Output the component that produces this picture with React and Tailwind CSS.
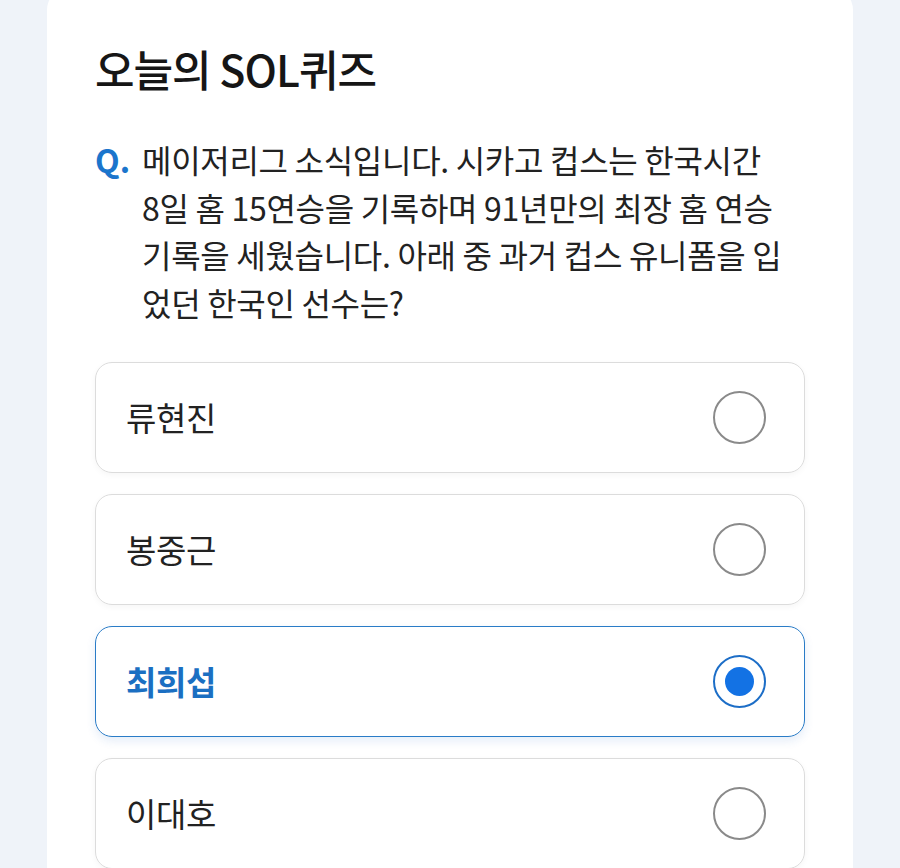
export default function App() {
  const options = ["류현진", "봉중근", "최희섭", "이대호"]
  const selected = 2
  const question = [
    "메이저리그 소식입니다. 시카고 컵스는 한국시간",
    "8일 홈 15연승을 기록하며 91년만의 최장 홈 연승",
    "기록을 세웠습니다. 아래 중 과거 컵스 유니폼을 입",
    "었던 한국인 선수는?",
  ]

  return (
    <div
      className="min-h-screen w-[900px] h-[868px] overflow-hidden bg-[#eff3f9]"
      style={{ fontFamily: '"Noto Sans CJK KR", "Noto Sans", sans-serif' }}
    >
      <div className="mx-[47px] -mt-[12px] h-[900px] rounded-[22px] bg-white px-[48px] pt-[54px]">
        <h1 className="text-[43px] leading-[52px] font-medium tracking-[-1px] text-[#161616]">
          오늘의 SOL퀴즈
        </h1>

        <div className="mt-[42px] flex">
          <span className="w-[47px] shrink-0 text-[32px] leading-[47.5px] font-bold text-[#1b75cc]">Q.</span>
          <p className="whitespace-nowrap text-[32px] leading-[47.5px] tracking-[-0.3px] text-[#222]">
            {question.map((line) => (
              <span key={line} className="block">
                {line}
              </span>
            ))}
          </p>
        </div>

        <div className="mt-[36px] flex flex-col gap-[21px]">
          {options.map((name, i) => {
            const active = i === selected
            return (
              <div
                key={name}
                className={`flex h-[111px] items-center justify-between rounded-[17px] border-[1.5px] pl-[30px] pr-[38px] ${
                  active
                    ? "border-[#2a7cc7] shadow-[0_4px_10px_rgba(40,110,200,0.12)]"
                    : "border-[#dcdcdc] shadow-[0_2px_6px_rgba(0,0,0,0.04)]"
                }`}
              >
                <span
                  className={`text-[33px] tracking-[-0.3px] ${
                    active ? "font-bold text-[#1b6fc2]" : "text-[#222]"
                  }`}
                >
                  {name}
                </span>
                {active ? (
                  <span className="flex h-[53px] w-[53px] items-center justify-center rounded-full border-[2.5px] border-[#1d6ec7]">
                    <span className="h-[29px] w-[29px] rounded-full bg-[#1372e4]" />
                  </span>
                ) : (
                  <span className="h-[53px] w-[53px] rounded-full border-[2.5px] border-[#8a8a8a]" />
                )}
              </div>
            )
          })}
        </div>
      </div>
    </div>
  )
}
